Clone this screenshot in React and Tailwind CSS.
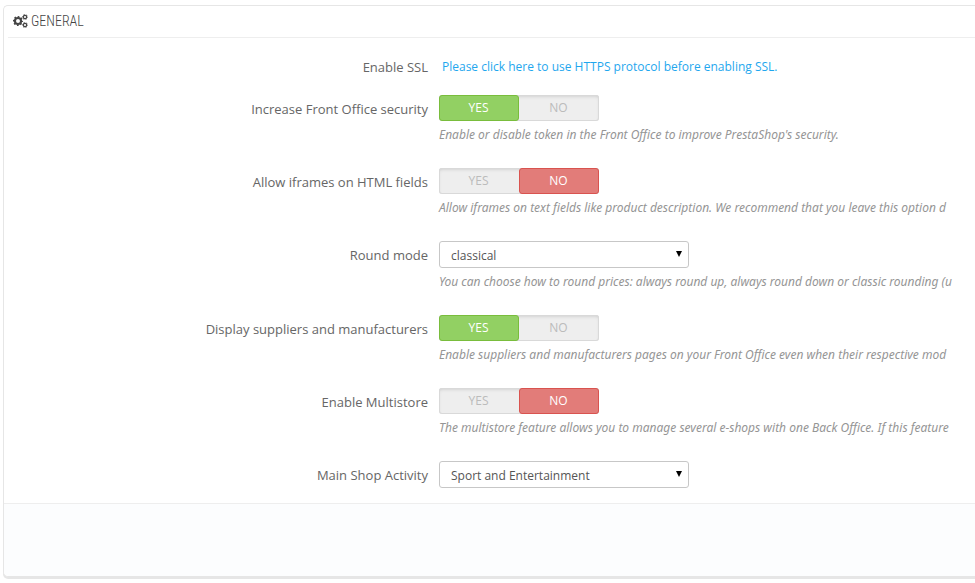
import React, { useState } from "react";
import clsx from "clsx";

const CogsIcon = () => (
    <svg viewBox="0 0 1920 1792" className="w-[15px] h-[14px]" fill="none" stroke="currentColor" aria-hidden="true">
        <circle cx="640" cy="896" r="390" strokeWidth="270" />
        <circle cx="640" cy="896" r="560" strokeWidth="180" strokeDasharray="220 220" strokeDashoffset="110" />
        {[384, 1408].map((cy) => (
            <g key={cy}>
                <circle cx="1536" cy={cy} r="215" strokeWidth="150" />
                <circle cx="1536" cy={cy} r="320" strokeWidth="110" strokeDasharray="168 167" strokeDashoffset="84" />
            </g>
        ))}
    </svg>
);

const Row = ({ label, htmlFor, labelId, help, children }) => (
    <div className="grid grid-cols-[minmax(0,424px)_minmax(0,1fr)] gap-x-[11px] mb-[15px]">
        <label
            id={labelId}
            htmlFor={htmlFor}
            className="pt-[5px] text-right text-[13px] leading-[18px] text-[#666] whitespace-nowrap"
        >
            {label}
        </label>
        <div className="min-h-[26px]">
            {children}
            {help && (
                <p className="mt-[5px] mb-[9px] text-[12px] leading-[18px] italic text-[#959595] whitespace-nowrap font-['Noto_Sans','Open_Sans',sans-serif]">
                    {help}
                </p>
            )}
        </div>
    </div>
);

const SwitchRow = ({ label, name, initial, help }) => {
    const [value, setValue] = useState(initial);
    const options = [
        { key: "yes", text: "YES", active: "border-[#79bd3c] bg-[#92d063] text-white" },
        { key: "no", text: "NO", active: "border-[#d9534f] bg-[#e27c79] text-white" }
    ];

    return (
        <Row label={label} labelId={`${name}_label`} htmlFor={`${name}_${value}`} help={help}>
            <div
                role="radiogroup"
                aria-labelledby={`${name}_label`}
                className="relative flex w-40 h-[26px] rounded-[3px] bg-[#eee] shadow-[inset_0_0_0_1px_#d9d9d9,inset_0_2px_3px_#d4d4d4]"
            >
                {options.map(({ key, text, active }) => (
                    <label
                        key={key}
                        className={clsx(
                            "flex-1 rounded-[3px] border pr-px text-center text-[12px] leading-6 cursor-pointer",
                            value === key ? active : "border-transparent text-[#bbb]"
                        )}
                    >
                        <input
                            type="radio"
                            id={`${name}_${key}`}
                            name={name}
                            value={key}
                            checked={value === key}
                            onChange={() => setValue(key)}
                            className="sr-only"
                        />
                        {text}
                    </label>
                ))}
            </div>
        </Row>
    );
};

const SelectRow = ({ label, name, options, help }) => (
    <Row label={label} htmlFor={name} help={help}>
        <div className="relative w-[250px]">
            <select
                id={name}
                name={name}
                className="block w-full h-[27px] appearance-none rounded-[3px] border border-[#c7c7c7] bg-white pl-[11px] pr-6 pt-[2px] text-[12px] text-[#555]"
            >
                {options.map((o) => (
                    <option key={o}>{o}</option>
                ))}
            </select>
            <svg
                viewBox="0 0 6 6"
                className="absolute right-[7px] top-[10px] w-[6px] h-[6px] pointer-events-none"
                aria-hidden="true"
            >
                <path d="M0 0h6L3 6z" fill="#000" />
            </svg>
        </div>
    </Row>
);

const App = () => (
    <div className="overflow-hidden pt-[5px] pl-[3px] pb-2 bg-white font-['Open_Sans',sans-serif]">
        <form className="rounded-l-[5px] border border-r-0 border-[#e6e6e6] bg-white shadow-[0_2px_0_#e6e6e6]">
            <h3 className="flex items-center gap-[3px] ml-1 h-8 pl-[5px] pb-px border-b border-[#eee] text-[14px] font-light text-[#444] font-['Ubuntu_Condensed','Roboto_Condensed',sans-serif]">
                <CogsIcon />
                GENERAL
            </h3>

            <div className="pt-[15px]">
                <Row label="Enable SSL">
                    <div className="h-[27px] pt-[5px] pl-[3px] text-[12px] leading-[18px] whitespace-nowrap">
                        <a href="#ssl" className="text-[#1fa7ee]">
                            Please click here to use HTTPS protocol before enabling SSL.
                        </a>
                    </div>
                </Row>
                <SwitchRow
                    label="Increase Front Office security"
                    name="token_enable"
                    initial="yes"
                    help="Enable or disable token in the Front Office to improve PrestaShop's security."
                />
                <SwitchRow
                    label="Allow iframes on HTML fields"
                    name="allow_iframe"
                    initial="no"
                    help="Allow iframes on text fields like product description. We recommend that you leave this option d"
                />
                <SelectRow
                    label="Round mode"
                    name="round_mode"
                    options={["classical"]}
                    help="You can choose how to round prices: always round up, always round down or classic rounding (u"
                />
                <SwitchRow
                    label="Display suppliers and manufacturers"
                    name="display_suppliers"
                    initial="yes"
                    help="Enable suppliers and manufacturers pages on your Front Office even when their respective mod"
                />
                <SwitchRow
                    label="Enable Multistore"
                    name="multistore"
                    initial="no"
                    help="The multistore feature allows you to manage several e-shops with one Back Office. If this feature"
                />
                <SelectRow
                    label="Main Shop Activity"
                    name="shop_activity"
                    options={["Sport and Entertainment"]}
                />
            </div>

            <div className="h-[73px] rounded-bl-[5px] border-t border-[#eee] bg-[#fcfdfe]" />
        </form>
    </div>
);

export default App;
